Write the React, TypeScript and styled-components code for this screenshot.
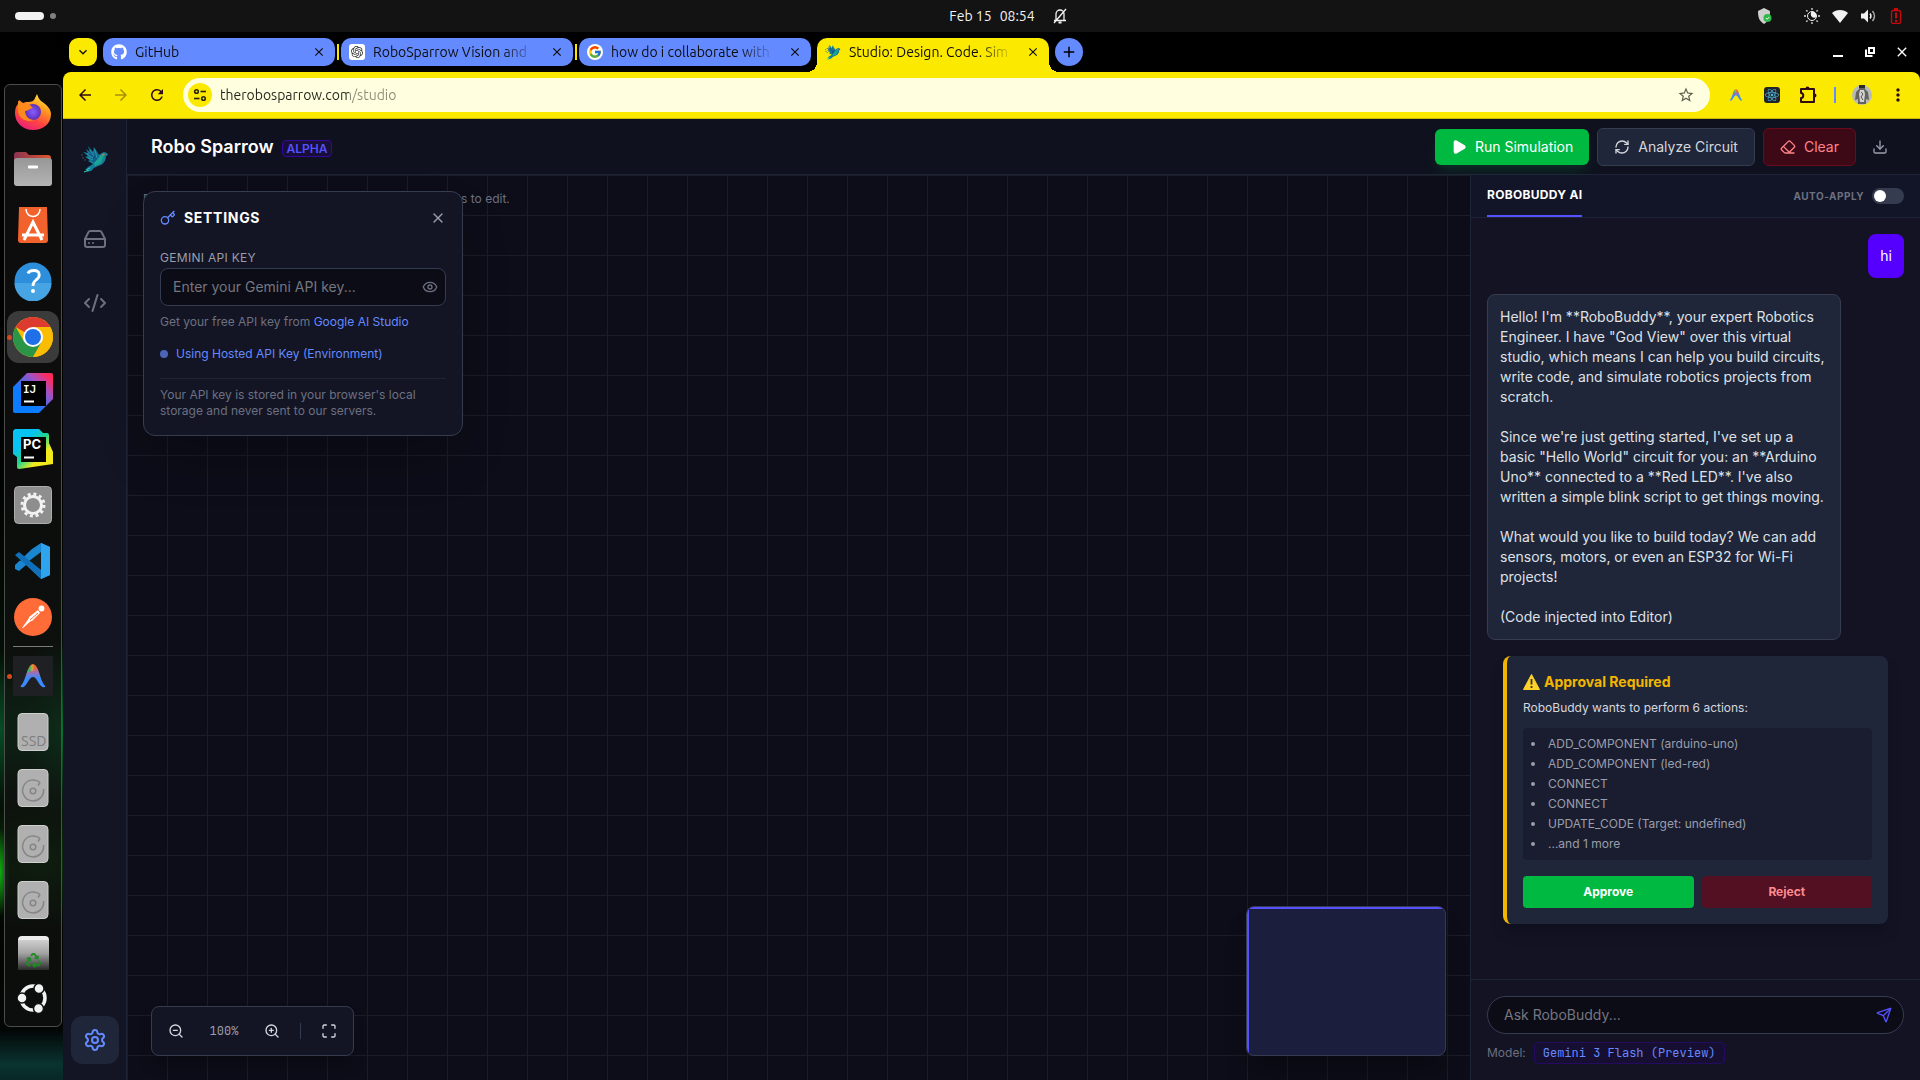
import React, { useState } from 'react';
import styled, { createGlobalStyle, css } from 'styled-components';
import {
  CodeXml, Download, Eraser, Eye, HardDrive, Key, Maximize, Play, RefreshCw, Send, Settings, X, ZoomIn, ZoomOut,
} from 'lucide-react';
import { FaGithub, FaReact, FaRecycle } from 'react-icons/fa';
import { FcGoogle } from 'react-icons/fc';
import { SiOpenai } from 'react-icons/si';
import { MdArrowBack, MdArrowForward, MdClose, MdExpandMore, MdMoreVert, MdRefresh, MdStarBorder, MdAdd } from 'react-icons/md';

const c = {
  yellow: '#fbe900',
  tab: '#648aff',
  rail: '#131525',
  header: '#0f111f',
  canvas: '#0c0d18',
  line: '#1e2437',
  edge: '#363c50',
  raised: '#20263a',
  muted: '#6c7080',
  soft: '#9a9dab',
  text: '#d5d7de',
  blue: '#648aff',
  indigo: '#5650ff',
  green: '#00b940',
};
const ui = `Inter, "Liberation Sans", sans-serif`;
const shell = `Ubuntu, "Open Sans", "Noto Sans", sans-serif`;
const mono = `"JetBrains Mono", "DejaVu Sans Mono", "Liberation Mono", monospace`;

const GlobalStyle = createGlobalStyle`
  *, *::before, *::after { box-sizing: border-box; }
  body { margin: 0; background: #000; font-family: ${ui}; }
  button, input { font: inherit; color: inherit; }
  button { border: 0; padding: 0; background: none; cursor: pointer; }
  h1, h2, h3, p, ul { margin: 0; padding: 0; }
  svg { display: block; flex: none; }
`;

/* ---------- desktop shell ---------- */
const Desktop = styled.div`
  height: 100vh;
  display: flex;
  flex-direction: column;
  overflow: hidden;
  background:
    radial-gradient(ellipse 10px 44px at 0 872px, #0fae10 0%, transparent 100%),
    radial-gradient(ellipse 60px 90px at 63px 730px, #08702f 0%, transparent 100%),
    radial-gradient(ellipse 40px 80px at 0 730px, #064d24 0%, transparent 100%),
    radial-gradient(ellipse 80px 70px at 40px 860px, #0b3d0c 0%, transparent 100%),
    linear-gradient(#000 0, #020303 500px, #041006 680px, #020602 960px, #020706 1030px, #0a3330 1064px, #072825 100%);
`;
const TopBar = styled.header`
  flex: none;
  height: 32px;
  display: grid;
  grid-template-columns: 1fr auto 1fr;
  align-items: center;
  background: #131313;
  color: #f2f2f2;
  font: 14px/20px ${shell};
`;
const Workspaces = styled.div`
  display: flex;
  align-items: center;
  gap: 6px;
  padding-left: 15px;
`;
const Pill = styled.i`
  width: 29px;
  height: 8px;
  border-radius: 4px;
  background: #f2f2f2;
`;
const Dot = styled.i`
  width: 6px;
  height: 6px;
  border-radius: 50%;
  background: #808080;
`;
const Clock = styled.div`
  display: flex;
  align-items: center;
  gap: 8px;
  padding-left: 96px;
  svg { margin-left: 10px; }
`;
const Tray = styled.div`
  display: flex;
  align-items: center;
  justify-content: flex-end;
  gap: 12px;
  padding-right: 16px;
`;
const TrayGap = styled.i`
  width: 8px;
`;
const Main = styled.div`
  flex: 1;
  min-height: 0;
  display: flex;
`;
const DockArea = styled.aside`
  flex: none;
  width: 63px;
  padding: 52px 1px 0 4px;
`;
const Dock = styled.nav`
  height: calc(100vh - 137px);
  max-height: 943px;
  display: flex;
  flex-direction: column;
  align-items: center;
  gap: 4px;
  padding: 2px 0 0;
  border: 1px solid #4b4d4b;
  border-radius: 6px;
  background: rgba(16, 18, 17, 0.72);
  overflow: hidden;
`;
const DockItem = styled.button<{ $active?: boolean; $running?: boolean; $cut?: boolean }>`
  position: relative;
  flex: none;
  width: 52px;
  height: 52px;
  display: grid;
  place-items: center;
  border-radius: 12px;
  background: ${(p) => (p.$active ? '#3b3b3b' : 'transparent')};
  ${(p) => p.$cut && css`
    height: 41px;
    margin-bottom: -3px;
    align-items: start;
    padding-top: 6px;
    overflow: hidden;
  `}
  ${(p) => p.$running && css`
    &::before {
      content: '';
      position: absolute;
      left: 0;
      top: 24px;
      width: 5px;
      height: 5px;
      border-radius: 50%;
      background: #d9481c;
    }
  `}
`;
const DockRule = styled.hr`
  flex: none;
  width: 40px;
  height: 1px;
  margin: -1px 0 -1px;
  border: 0;
  background: #7a7d7a;
`;

/* ---------- browser ---------- */
const Browser = styled.div`
  flex: 1;
  min-width: 0;
  display: flex;
  flex-direction: column;
`;
const TabStrip = styled.div`
  flex: none;
  height: 40px;
  display: flex;
  padding: 6px 6px 0;
  background: #000;
`;
const TabMenu = styled.button`
  width: 28px;
  height: 28px;
  margin-right: 6px;
  display: grid;
  place-items: center;
  border-radius: 9px;
  background: ${c.yellow};
  color: #111;
`;
const Tab = styled.div<{ $active?: boolean }>`
  position: relative;
  flex: 0 1 232px;
  min-width: 0;
  height: 28px;
  display: flex;
  align-items: center;
  gap: 8px;
  padding: 0 8px;
  border-radius: 10px;
  background: ${c.tab};
  color: #0d0d0d;
  font: 14px/20px ${shell};
  ${(p) => p.$active && css`
    height: 34px;
    padding-bottom: 6px;
    border-radius: 10px 10px 0 0;
    background: ${c.yellow};
    &::before, &::after {
      content: '';
      position: absolute;
      bottom: 0;
      width: 10px;
      height: 10px;
    }
    &::before {
      left: -10px;
      background: radial-gradient(circle at 0 0, transparent 10px, ${c.yellow} 10px);
    }
    &::after {
      right: -10px;
      background: radial-gradient(circle at 100% 0, transparent 10px, ${c.yellow} 10px);
    }
  `}
`;
const TabTitle = styled.span`
  flex: 1;
  min-width: 0;
  overflow: hidden;
  white-space: nowrap;
  mask-image: linear-gradient(90deg, #000 calc(100% - 40px), transparent calc(100% - 4px));
`;
const TabClose = styled.button`
  width: 16px;
  height: 16px;
  display: grid;
  place-items: center;
`;
const Favicon = styled.span<{ $bg?: string; $round?: boolean }>`
  flex: none;
  width: 16px;
  height: 16px;
  display: grid;
  place-items: center;
  border-radius: ${(p) => (p.$round ? '50%' : '3px')};
  background: ${(p) => p.$bg || 'none'};
  color: ${(p) => (p.$bg ? '#333' : '#fff')};
`;
const TabGap = styled.i<{ $hidden?: boolean }>`
  width: 2px;
  height: 16px;
  margin: 6px 2px 0;
  background: ${(p) => (p.$hidden ? 'transparent' : c.yellow)};
`;
const NewTab = styled.button`
  width: 28px;
  height: 28px;
  margin-left: 6px;
  display: grid;
  place-items: center;
  border-radius: 50%;
  background: ${c.tab};
  color: #000;
`;
const WindowControls = styled.div`
  display: flex;
  gap: 16px;
  margin: 0 4px 0 auto;
  color: #fff;
  button { width: 16px; height: 28px; display: grid; place-items: center; }
`;
const Toolbar = styled.div`
  flex: none;
  display: flex;
  align-items: center;
  padding: 6px 4px;
  border-bottom: 1px solid #c5b70c;
  border-radius: 8px 8px 0 0;
  background: ${c.yellow};
  color: #2d0c12;
`;
const ToolButton = styled.button<{ $dim?: boolean }>`
  width: 36px;
  height: 34px;
  display: grid;
  place-items: center;
  opacity: ${(p) => (p.$dim ? 0.4 : 1)};
`;
const Omnibox = styled.form`
  flex: 1;
  height: 34px;
  margin: 0 8px;
  display: flex;
  align-items: center;
  gap: 8px;
  padding: 0 15px 0 5px;
  border-radius: 17px;
  background: #ffffdf;
`;
const SiteInfo = styled.button`
  width: 24px;
  height: 24px;
  display: grid;
  place-items: center;
  border-radius: 50%;
  background: ${c.yellow};
`;
const Url = styled.input`
  flex: 1;
  min-width: 0;
  padding: 0;
  border: 0;
  outline: 0;
  font: 14px/20px ${shell};
  color: #24241c;
  background: linear-gradient(90deg, #24241c 129px, #8a8a78 129px);
  background-clip: text;
  -webkit-text-fill-color: transparent;
`;
const StarButton = styled.button`
  color: #5f5f52;
`;
const ToolRule = styled.i`
  width: 2px;
  height: 16px;
  margin: 0 8px;
  background: ${c.tab};
`;

/* ---------- studio ---------- */
const Studio = styled.div`
  flex: 1;
  min-height: 0;
  display: flex;
  color: ${c.text};
  font-size: 14px;
  line-height: 20px;
`;
const Rail = styled.nav`
  flex: none;
  width: 64px;
  display: flex;
  flex-direction: column;
  align-items: center;
  gap: 16px;
  padding: 16px 0;
  border-right: 1px solid ${c.line};
  background: ${c.rail};
`;
const Logo = styled.div`
  height: 48px;
  margin-bottom: 16px;
  display: grid;
  place-items: center;
`;
const RailButton = styled.button<{ $active?: boolean; $last?: boolean }>`
  width: 48px;
  height: 48px;
  display: grid;
  place-items: center;
  border-radius: 12px;
  color: ${(p) => (p.$active ? c.blue : c.muted)};
  background: ${(p) => (p.$active ? c.raised : 'transparent')};
  margin-top: ${(p) => (p.$last ? 'auto' : '0')};
`;
const Work = styled.div`
  flex: 1;
  min-width: 0;
  display: flex;
  flex-direction: column;
`;
const Header = styled.header`
  flex: none;
  height: 56px;
  display: flex;
  align-items: center;
  gap: 8px;
  padding: 0 24px;
  border-bottom: 1px solid ${c.line};
  background: ${c.header};
`;
const Brand = styled.h1`
  font-size: 18px;
  line-height: 28px;
  font-weight: 600;
  color: #fff;
`;
const Badge = styled.span`
  margin: 3px auto 0 0;
  padding: 0 4px;
  border: 1px solid #36079f;
  border-radius: 4px;
  background: #170f38;
  color: ${c.indigo};
  font-size: 12px;
  line-height: 15px;
  font-weight: 600;
`;
const Action = styled.button<{ $tone: 'run' | 'plain' | 'danger' }>`
  display: flex;
  align-items: center;
  gap: 8px;
  padding: 8px 16px;
  border-radius: 6px;
  ${(p) => p.$tone === 'run' && css`
    background: ${c.green};
    color: #fff;
    box-shadow: 0 10px 15px -3px rgba(0, 130, 60, 0.2), 0 4px 6px -4px rgba(0, 130, 60, 0.2);
  `}
  ${(p) => p.$tone === 'plain' && css`
    border: 1px solid ${c.edge};
    background: ${c.raised};
    color: ${c.text};
  `}
  ${(p) => p.$tone === 'danger' && css`
    border: 1px solid #6a0a1c;
    background: #3d0917;
    color: #ff8488;
  `}
`;
const IconButton = styled.button<{ $color?: string }>`
  padding: 8px;
  color: ${(p) => p.$color || c.soft};
`;
const Body = styled.div`
  flex: 1;
  min-height: 0;
  display: flex;
`;
const Canvas = styled.main`
  position: relative;
  flex: 1;
  min-width: 0;
  background-color: ${c.canvas};
  background-image:
    linear-gradient(90deg, #1a1c26 1px, transparent 1px),
    linear-gradient(#1a1c26 1px, transparent 1px);
  background-size: 40px 40px;
`;
const Hint = styled.p`
  position: absolute;
  left: 16px;
  top: 16px;
  font-size: 12px;
  line-height: 16px;
  color: ${c.muted};
`;
const Panel = styled.section`
  position: absolute;
  left: 16px;
  top: 16px;
  width: 320px;
  padding: 16px;
  border: 1px solid ${c.edge};
  border-radius: 12px;
  background: ${c.rail};
  box-shadow: 0 25px 50px -12px rgba(0, 0, 0, 0.3);
  font-size: 12px;
  line-height: 16px;
  color: ${c.muted};
`;
const PanelHead = styled.div`
  display: flex;
  align-items: center;
  gap: 8px;
  margin-bottom: 20px;
  color: ${c.blue};
  h2 {
    flex: 1;
    font-size: 14px;
    line-height: 20px;
    font-weight: 700;
    letter-spacing: 0.05em;
    color: #fff;
  }
  button { color: ${c.soft}; }
`;
const FieldLabel = styled.label`
  display: block;
  padding: 2px 0;
  letter-spacing: 0.025em;
  color: ${c.soft};
`;
const KeyField = styled.div`
  display: flex;
  align-items: center;
  margin-bottom: 8px;
  border: 1px solid ${c.edge};
  border-radius: 8px;
  background: #0b0c15;
  color: ${c.muted};
`;
const TextInput = styled.input`
  flex: 1;
  min-width: 0;
  padding: 8px 12px;
  border: 0;
  outline: 0;
  background: none;
  font-size: 14px;
  line-height: 20px;
  color: ${c.text};
  &::placeholder { color: #757681; opacity: 1; }
`;
const Reveal = styled.button`
  padding: 0 7px;
`;
const Link = styled.a`
  color: ${c.blue};
  text-decoration: none;
`;
const Status = styled.p`
  display: flex;
  align-items: center;
  gap: 8px;
  margin: 16px 0;
  color: ${c.blue};
  &::before {
    content: '';
    width: 8px;
    height: 8px;
    border-radius: 50%;
    background: #4a64b8;
  }
`;
const Note = styled.p`
  padding-top: 8px;
  border-top: 1px solid ${c.line};
`;
const ZoomBar = styled.div`
  position: absolute;
  left: 24px;
  bottom: 24px;
  display: flex;
  align-items: center;
  gap: 8px;
  padding: 8px;
  border: 1px solid ${c.edge};
  border-radius: 8px;
  background: ${c.rail};
  box-shadow: 0 10px 15px -3px rgba(0, 0, 0, 0.3);
`;
const ZoomValue = styled.output`
  width: 48px;
  text-align: center;
  font: 12px/16px ${mono};
  color: ${c.soft};
`;
const ZoomRule = styled.i`
  width: 1px;
  height: 16px;
  margin: 0 4px;
  background: ${c.edge};
`;
const MiniMap = styled.div`
  position: absolute;
  right: 24px;
  bottom: 24px;
  width: 200px;
  height: 150px;
  overflow: hidden;
  border: 1px solid ${c.edge};
  border-radius: 8px;
  background: #1c1e3e;
  box-shadow: 0 20px 25px -5px rgba(0, 0, 0, 0.3);
  &::before {
    content: '';
    display: block;
    height: 100%;
    border: solid ${c.indigo};
    border-width: 2px 0 0 2px;
  }
`;

/* ---------- assistant ---------- */
const Chat = styled.aside`
  flex: none;
  width: 450px;
  display: flex;
  flex-direction: column;
  border-left: 1px solid ${c.line};
  background: #131324;
`;
const ChatHead = styled.div`
  flex: none;
  display: flex;
  align-items: center;
  justify-content: space-between;
  padding: 0 16px;
  border-bottom: 1px solid ${c.line};
  background: #121527;
`;
const ChatTab = styled.button`
  padding: 12px 0;
  border-bottom: 2px solid ${c.indigo};
  font-size: 12px;
  line-height: 16px;
  font-weight: 700;
  letter-spacing: 0.025em;
  color: #fff;
`;
const Switch = styled.label`
  display: flex;
  align-items: center;
  gap: 8px;
  font-size: 10px;
  line-height: 16px;
  font-weight: 700;
  letter-spacing: 0.05em;
  color: ${c.muted};
  input {
    appearance: none;
    width: 32px;
    height: 16px;
    margin: 0;
    padding: 2px;
    border-radius: 8px;
    background: ${c.edge};
  }
  input::before {
    content: '';
    display: block;
    width: 12px;
    height: 12px;
    border-radius: 50%;
    background: #fff;
  }
  input:checked { background: ${c.indigo}; }
  input:checked::before { margin-left: auto; }
`;
const Messages = styled.div`
  flex: 1;
  min-height: 0;
  overflow: auto;
  display: flex;
  flex-direction: column;
  gap: 16px;
  padding: 16px;
`;
const Bubble = styled.div<{ $mine?: boolean }>`
  max-width: 85%;
  padding: 12px;
  border-radius: 8px;
  white-space: pre-wrap;
  align-self: ${(p) => (p.$mine ? 'flex-end' : 'flex-start')};
  background: ${(p) => (p.$mine ? '#5500ff' : c.raised)};
  border: ${(p) => (p.$mine ? '0' : `1px solid ${c.edge}`)};
  color: ${(p) => (p.$mine ? '#fff' : '#dfe1e6')};
`;
const Approval = styled.section`
  margin: 0 16px;
  padding: 16px;
  border-left: 4px solid #f3b600;
  border-radius: 8px;
  background: ${c.raised};
  box-shadow: 0 10px 15px -3px rgba(0, 0, 0, 0.25);
  font-size: 12px;
  line-height: 16px;
  h3 {
    display: flex;
    align-items: center;
    gap: 4px;
    margin-bottom: 8px;
    font-size: 14px;
    line-height: 20px;
    font-weight: 700;
    color: #f3b600;
  }
`;
const ActionList = styled.ul`
  display: flex;
  flex-direction: column;
  gap: 4px;
  margin: 12px 0 16px;
  padding: 8px;
  border-radius: 4px;
  background: #191d2f;
  color: ${c.soft};
  list-style: disc inside;
`;
const Choices = styled.div`
  display: grid;
  grid-template-columns: 1fr 1fr;
  gap: 8px;
`;
const Choice = styled.button<{ $reject?: boolean }>`
  padding: 8px;
  border-radius: 4px;
  font-weight: 700;
  background: ${(p) => (p.$reject ? '#521022' : c.green)};
  color: ${(p) => (p.$reject ? '#ff8a8e' : '#fff')};
`;
const Composer = styled.div`
  flex: none;
  display: flex;
  flex-direction: column;
  gap: 8px;
  padding: 16px;
  border-top: 1px solid ${c.line};
`;
const AskForm = styled.form`
  display: flex;
  align-items: center;
  border: 1px solid ${c.edge};
  border-radius: 19px;
  background: #0b0c15;
  color: ${c.indigo};
  input { padding: 8px 16px; }
  button { padding: 0 11px; }
`;
const ModelRow = styled.div`
  display: flex;
  align-items: center;
  gap: 8px;
  font-size: 12px;
  line-height: 16px;
  color: ${c.muted};
`;
const ModelName = styled.button`
  padding: 2px 8px;
  border: 1px solid #250b60;
  border-radius: 4px;
  background: #170f32;
  font: 12px/16px ${mono};
  color: ${c.blue};
`;

/* ---------- drawings ---------- */
const Bird = ({ size }: { size: number }) => (
  <svg width={size} height={size} viewBox="0 0 28 28">
    <path d="M7 1l5 6 1-5 5 8 3-2 2-1 3 1 1 2-2 1c0 5-3 9-8 10l-4 2-3 3-5 1 3-3-4 1 3-3 5-3-5-3 2-1-5-3 3-1-5-4 5 1-2-4 4 3z" fill="#147e96" />
    <path d="M8 3l5 7 1-6 4 9-4 5-6-4 3-1-6-4 4 0z" fill="#125b8a" />
    <path d="M9 5l4 6M14 5l2 8M6 9l6 4M7 13l5 2" stroke="#2fa9b4" strokeWidth="0.800" />
    <path d="M13 18l8-9 2 1-3 8-6 3z" fill="#1ca596" />
    <path d="M5 25l4-2M3 27l5-2" stroke="#2ad0c0" />
    <path d="M0 10h2M1 13h2M3 15h2" stroke="#35505f" />
    <circle cx="22.500" cy="9.500" r="1.100" fill="#f06a24" />
  </svg>
);
const BellOff = () => (
  <svg width="14" height="16" viewBox="0 0 14 16" fill="none" stroke="#f2f2f2" strokeWidth="1.300">
    <path d="M3 12V6a4 4 0 0 1 8 0v6M1 12.500h12M1 15L13 1" />
    <path d="M5.500 14.500h3" strokeWidth="2" />
  </svg>
);
const Shield = () => (
  <svg width="15" height="16" viewBox="0 0 15 16">
    <path d="M7 0l6 3c0 6-1 10-6 13C2 13 1 9 1 3z" fill="#cfcfcf" />
    <circle cx="10.500" cy="10" r="4" fill="#2eb84a" />
    <path d="M8.800 10l1.300 1.300 2.200-2.300" stroke="#fff" fill="none" />
  </svg>
);
const NightLight = () => (
  <svg width="16" height="16" viewBox="0 0 16 16">
    <path d="M8 0v2M8 14v2M0 8h2M14 8h2M2.300 2.300l1.200 1.200M12.500 12.500l1.200 1.200M2.300 13.700l1.200-1.200M12.500 3.500l1.200-1.200" stroke="#ddd" strokeWidth="1.300" />
    <circle cx="8" cy="8" r="4.500" fill="none" stroke="#f2f2f2" />
    <path d="M7.500 3.600a4.500 4.500 0 0 1 4.900 5.400c-1.500 1.200-3.400 1-4.400 0-1.500-1.400-1.600-3.600-.5-5.400z" fill="#f2f2f2" />
  </svg>
);
const Wifi = () => (
  <svg width="16" height="14" viewBox="0 0 16 14"><path d="M0 4C4 0 12 0 16 4L8 14z" fill="#f2f2f2" /></svg>
);
const Volume = () => (
  <svg width="16" height="16" viewBox="0 0 16 16" fill="none" stroke="#f2f2f2">
    <path d="M1 5.500h3l4-4v13l-4-4H1z" fill="#f2f2f2" stroke="none" />
    <path d="M10 5.500q2 2.500 0 5" strokeWidth="1.400" />
    <path d="M12.500 3q4 5 0 10" stroke="#aaa" strokeWidth="1.400" />
  </svg>
);
const Battery = () => (
  <svg width="16" height="16" viewBox="0 0 16 16" fill="none" stroke="#c9080c">
    <rect x="3.500" y="2.500" width="9" height="13" rx="1.500" strokeWidth="1.300" />
    <path d="M6 1h4M8 4.500v6M8 12v2" strokeWidth="2" />
  </svg>
);
const Tune = () => (
  <svg width="14" height="14" viewBox="0 0 14 14" fill="none" stroke="#2a2410" strokeWidth="1.600">
    <circle cx="3.500" cy="3.500" r="1.800" /><path d="M7.500 3.500H13" />
    <circle cx="10.500" cy="10.500" r="1.800" /><path d="M1 10.500h5.500" />
  </svg>
);
const Puzzle = () => (
  <svg width="18" height="18" viewBox="0 0 18 18" fill="none" stroke="#2d0c12" strokeWidth="2" strokeLinejoin="round">
    <path d="M2 3h13v13H2v-4c3 0 3-5 0-5z" />
    <path d="M6.500 2.500a2 2 0 0 1 4 0zM15.500 7.500a2 2 0 0 1 0 4z" fill="#2d0c12" stroke="none" />
  </svg>
);
const Restore = () => (
  <svg width="16" height="16" viewBox="0 0 16 16" fill="none" stroke="#fff" strokeWidth="2">
    <path d="M7 4h5v5H7z" /><path d="M4 5.500V12h6.500" />
  </svg>
);
const Arc = ({ size }: { size: number }) => (
  <svg width={size} height={size} viewBox="0 0 40 40">
    <defs>
      <linearGradient id="arcBase" x1="0" x2="0" y1="0" y2="1">
        <stop offset="0.100" stopColor="#f0642c" /><stop offset="0.350" stopColor="#a06fb0" /><stop offset="0.600" stopColor="#3b8bff" />
      </linearGradient>
      <linearGradient id="arcSide" x1="0" x2="1" y1="0" y2="0">
        <stop offset="0.250" stopColor="#2fbb6a" /><stop offset="0.500" stopColor="#f5b02e" stopOpacity="0.700" /><stop offset="0.650" stopColor="#f0503c" stopOpacity="0" />
      </linearGradient>
    </defs>
    <path d="M6 31c6-3 7-24 14-24s8 21 14 24c-1 2-3 2-5 0-4-4-5-10-9-10s-5 6-9 10c-2 2-4 2-5 0z" fill="url(#arcBase)" />
    <path d="M13 18c2-6 4-11 7-11s5 4 7 11c-3-5-11-5-14 0z" fill="url(#arcSide)" />
  </svg>
);
const Avatar = () => (
  <svg width="20" height="20" viewBox="0 0 20 20">
    <circle cx="10" cy="10" r="10" fill="#b9bbb8" />
    <path d="M7 0h6v4l3 3 1 8-3-1v5H6v-5l-3 1L4 7l3-3z" fill="#63635f" />
    <path d="M7 0h6v3H7z" fill="#2b2b2a" />
    <path d="M8 5h4l1 4-1 8H8L7 9z" fill="#d2d2ce" /><path d="M9 7l2 2-2 3 2 3" stroke="#555" fill="none" />
  </svg>
);
const Warning = () => (
  <svg width="17" height="16" viewBox="0 0 17 16">
    <path d="M8.500.500L16.500 15.500H.500z" fill="#fdd22a" stroke="#fdd22a" strokeLinejoin="round" />
    <path d="M8.500 5v5.500M8.500 12v2" stroke="#3a3222" strokeWidth="1.800" />
  </svg>
);

const Firefox = () => (
  <svg width="40" height="40" viewBox="0 0 40 40">
    <defs>
      <linearGradient id="ffBody" x1="0.800" y1="0" x2="0.300" y2="1">
        <stop offset="0" stopColor="#fff24a" /><stop offset="0.350" stopColor="#ff9a1f" /><stop offset="0.700" stopColor="#ff4444" /><stop offset="1" stopColor="#e8207a" />
      </linearGradient>
      <radialGradient id="ffCore"><stop offset="0" stopColor="#8a5cff" /><stop offset="1" stopColor="#5c2fb8" /></radialGradient>
    </defs>
    <path d="M2 20c0-4 1-7 3-9l1-4 4 3 3-1c3 0 6 0 8-2l3-6c1 3 2 5 4 7 6 4 10 8 10 13C38 31 30 37 20 37S2 30 2 20z" fill="url(#ffBody)" />
    <circle cx="20" cy="19" r="8" fill="url(#ffCore)" />
    <path d="M5 8l6 3 6 1 3 3c-3 0-4 3-8 3 0 5 4 9 9 9-8 3-14-1-16-8z" fill="#ff8a1c" />
  </svg>
);
const Files = () => (
  <svg width="40" height="40" viewBox="0 0 40 40">
    <defs>
      <linearGradient id="folder" x1="0" x2="1"><stop offset="0" stopColor="#8a3350" /><stop offset="1" stopColor="#e0562c" /></linearGradient>
      <linearGradient id="drawer" x1="0" x2="0" y1="0" y2="1"><stop offset="0" stopColor="#979797" /><stop offset="1" stopColor="#b4b4b4" /></linearGradient>
    </defs>
    <path d="M1 6a3 3 0 0 1 3-3h9l3 3h19a3 3 0 0 1 3 3v8H1z" fill="url(#folder)" />
    <rect x="1" y="9" width="38" height="28" rx="3" fill="url(#drawer)" />
    <rect x="15" y="16.500" width="10" height="3" rx="1" fill="#fff" />
  </svg>
);
const Store = () => (
  <svg width="40" height="40" viewBox="0 0 40 40" fill="none" stroke="#fff">
    <path d="M6 2h28l1 33a3 3 0 0 1-3 3H8a3 3 0 0 1-3-3z" fill="#f2622c" stroke="none" />
    <path d="M13 4c0 10 14 10 14 0" strokeWidth="1.500" />
    <path d="M11 35l9-18 9 18M9 30h22" strokeWidth="3" />
  </svg>
);
const Help = () => (
  <svg width="40" height="40" viewBox="0 0 40 40">
    <circle cx="20" cy="20" r="18.500" fill="#2d8fdb" />
    <path d="M1.500 22a18.500 18.500 0 0 0 37 0z" fill="#46a4e4" />
    <path d="M15 12.500q1-3 6-3c6 0 7 6 2 9.500-2 1.500-3 3-3 6" fill="none" stroke="#fff" strokeWidth="2.800" />
    <circle cx="20" cy="30" r="2" fill="#fff" />
  </svg>
);
const Chrome = () => (
  <svg width="40" height="40" viewBox="0 0 40 40">
    <circle cx="20" cy="20" r="20" fill="#fbbc04" />
    <path d="M20 20L2.700 10A20 20 0 0 1 37.300 10H20z" fill="#dd3b30" />
    <path d="M2.700 10A20 20 0 0 0 20 40l8.700-15L20 20 11.300 25z" fill="#2a9447" />
    <path d="M20 40l8.700-15a10 10 0 0 0-2-15h10.600A20 20 0 0 1 20 40z" fill="#fbbc04" />
    <circle cx="20" cy="20" r="10" fill="#fff" /><circle cx="20" cy="20" r="8" fill="#1f6fe8" />
  </svg>
);
const Jet = ({ label, kind }: { label: string; kind: 'ij' | 'pc' }) => (
  <svg width="40" height="40" viewBox="0 0 40 40">
    <defs>
      <linearGradient id="ij" x1="0" y1="1" x2="1" y2="0"><stop offset="0.350" stopColor="#0a7cff" /><stop offset="0.700" stopColor="#a84fc0" /><stop offset="0.900" stopColor="#ff2a5e" /></linearGradient>
      <linearGradient id="pc" x1="0" y1="0" x2="1" y2="1"><stop offset="0.300" stopColor="#07c3f2" /><stop offset="0.500" stopColor="#21d789" /><stop offset="0.700" stopColor="#f2ea1c" /></linearGradient>
    </defs>
    {kind === 'ij'
      ? <path d="M14 0h24a2 2 0 0 1 2 2v24L26 40H2a2 2 0 0 1-2-2V14z" fill="url(#ij)" />
      : <path d="M2 0h24l4 4h4a2 2 0 0 1 2 2v8l4 9v12L6 40a2 2 0 0 1-2-2V28l-4-3V2z" fill="url(#pc)" />}
    <rect x="8" y="8" width="25" height="25" fill="#000" />
    <text x="10" y="20" fill="#fff" fontFamily={kind === 'ij' ? mono : ui} fontWeight="700" fontSize={kind === 'ij' ? 11 : 13}>{label}</text>
    <path d="M11 28.500h10" stroke="#fff" strokeWidth="2" />
  </svg>
);
const Gear = () => (
  <svg width="40" height="40" viewBox="0 0 40 40" fill="none">
    <rect x="1.500" y="1.500" width="37" height="37" rx="4" fill="#8e8e8e" stroke="#aeaeae" />
    <circle cx="20" cy="20" r="11" stroke="#f2f2f2" strokeWidth="3" strokeDasharray="3 2.760" />
    <circle cx="20" cy="20" r="8.500" stroke="#f2f2f2" strokeWidth="3" />
  </svg>
);
const Code = () => (
  <svg width="40" height="40" viewBox="0 0 40 40">
    <path d="M28 2l9 4v28l-9 4L13 24l-7 6-4-2V24l17-16z" fill="#1a86d0" />
    <path d="M28 2l9 4v28l-9 4z" fill="#2fa4ee" />
    <path d="M28 11v18L16 20zM2 15l4-3 5 5-4 3zM2 25l5-5" fill="#111a18" />
    <path d="M2 14l4-3 22 18v8z" fill="#0f6fb8" />
  </svg>
);
const Postman = () => (
  <svg width="40" height="40" viewBox="0 0 40 40">
    <circle cx="20" cy="20" r="19" fill="#ff6c37" />
    <circle cx="28.500" cy="11.500" r="2.900" fill="#fff" />
    <path d="M16 20l9-7 2 3-8 8-4 1zM9 31l7-10 3 2-9 8z" fill="#fff" />
    <path d="M17 23l8-7" stroke="#ff6c37" />
  </svg>
);
const Disk = ({ ssd }: { ssd?: boolean }) => (
  <svg width="40" height="40" viewBox="0 0 40 40" fill="none" stroke="#858585">
    <rect x="5" y="1.500" width="30" height="37" rx="4" fill="#b0b0b0" stroke="#cfcfcf" />
    {ssd
      ? <text x="8" y="34" fill="#7e7e7e" stroke="none" fontFamily="Open Sans, sans-serif" fontSize="14">SSD</text>
      : <><path d="M27 14.500A10.500 10.500 0 1 0 30.500 21" strokeWidth="1.500" /><path d="M27 14.500l-2 3" strokeWidth="1.500" /><circle cx="20" cy="23" r="2.800" strokeWidth="1.500" /></>}
  </svg>
);
const TrashArt = styled.span`
  width: 31px;
  height: 34px;
  display: grid;
  place-items: end center;
  padding-bottom: 2px;
  border-top: 4px solid #ececec;
  border-radius: 4px 4px 0 0;
  background: linear-gradient(#cfcfcf, #a2a2a2 45%, #2a2a2a);
  color: #1d8a22;
`;
const UbuntuLogo = () => (
  <svg width="32" height="32" viewBox="0 0 32 32" fill="none">
    <circle cx="16" cy="16" r="12" stroke="#f2f2f2" strokeWidth="3.500" />
    <g fill="#f2f2f2" stroke="#101211" strokeWidth="1.500">
      <circle cx="5" cy="16" r="5" /><circle cx="22" cy="6.500" r="5" /><circle cx="21.500" cy="26.500" r="5" />
    </g>
  </svg>
);

const ArcTile = styled.span`
  width: 40px;
  height: 40px;
  display: grid;
  place-items: center;
  background: #1f2024;
`;

const message = `Hello! I'm **RoboBuddy**, your expert Robotics Engineer. I have "God View" over this virtual studio, which means I can help you build circuits, write code, and simulate robotics projects from scratch.

Since we're just getting started, I've set up a basic "Hello World" circuit for you: an **Arduino Uno** connected to a **Red LED**. I've also written a simple blink script to get things moving.

What would you like to build today? We can add sensors, motors, or even an ESP32 for Wi-Fi projects!

(Code injected into Editor)`;

const actions = ['ADD_COMPONENT (arduino-uno)', 'ADD_COMPONENT (led-red)', 'CONNECT', 'CONNECT', 'UPDATE_CODE (Target: undefined)', '...and 1 more'];

function SystemDock() {
  return (
    <DockArea>
      <Dock>
        <DockItem><Firefox /></DockItem>
        <DockItem><Files /></DockItem>
        <DockItem><Store /></DockItem>
        <DockItem><Help /></DockItem>
        <DockItem $active $running><Chrome /></DockItem>
        <DockItem><Jet label="IJ" kind="ij" /></DockItem>
        <DockItem><Jet label="PC" kind="pc" /></DockItem>
        <DockItem><Gear /></DockItem>
        <DockItem><Code /></DockItem>
        <DockItem><Postman /></DockItem>
        <DockRule />
        <DockItem $running><ArcTile><Arc size={36} /></ArcTile></DockItem>
        <DockItem><Disk ssd /></DockItem>
        <DockItem><Disk /></DockItem>
        <DockItem><Disk /></DockItem>
        <DockItem><Disk /></DockItem>
        <DockItem $cut><TrashArt><FaRecycle size={15} /></TrashArt></DockItem>
        <DockItem><UbuntuLogo /></DockItem>
      </Dock>
    </DockArea>
  );
}

function BrowserChrome() {
  return (
    <>
      <TabStrip>
        <TabMenu><MdExpandMore size={16} /></TabMenu>
        <Tab>
          <Favicon><FaGithub size={16} /></Favicon>
          <TabTitle>GitHub</TabTitle>
          <TabClose><MdClose size={14} /></TabClose>
        </Tab>
        <TabGap />
        <Tab>
          <Favicon $bg="#fff"><SiOpenai size={12} /></Favicon>
          <TabTitle>RoboSparrow Vision and</TabTitle>
          <TabClose><MdClose size={14} /></TabClose>
        </Tab>
        <TabGap />
        <Tab>
          <Favicon $bg="#fff" $round><FcGoogle size={14} /></Favicon>
          <TabTitle>how do i collaborate with</TabTitle>
          <TabClose><MdClose size={14} /></TabClose>
        </Tab>
        <TabGap $hidden />
        <Tab $active>
          <Favicon><Bird size={16} /></Favicon>
          <TabTitle>Studio: Design. Code. Sim</TabTitle>
          <TabClose><MdClose size={14} /></TabClose>
        </Tab>
        <NewTab><MdAdd size={18} /></NewTab>
        <WindowControls>
          <button aria-label="Minimize"><svg width="16" height="16"><path d="M3 12h10" stroke="#fff" strokeWidth="2" /></svg></button>
          <button aria-label="Restore"><Restore /></button>
          <button aria-label="Close"><MdClose size={16} /></button>
        </WindowControls>
      </TabStrip>
      <Toolbar>
        <ToolButton><MdArrowBack size={18} /></ToolButton>
        <ToolButton $dim><MdArrowForward size={18} /></ToolButton>
        <ToolButton><MdRefresh size={18} /></ToolButton>
        <Omnibox onSubmit={(e) => e.preventDefault()}>
          <SiteInfo type="button"><Tune /></SiteInfo>
          <Url aria-label="Address" defaultValue="therobosparrow.com/studio" />
          <StarButton type="button"><MdStarBorder size={18} /></StarButton>
        </Omnibox>
        <ToolButton><Arc size={18} /></ToolButton>
        <ToolButton><Favicon $bg="#20232a"><FaReact size={14} color="#4fb8dc" /></Favicon></ToolButton>
        <ToolButton><Puzzle /></ToolButton>
        <ToolRule />
        <ToolButton><Avatar /></ToolButton>
        <ToolButton><MdMoreVert size={20} /></ToolButton>
      </Toolbar>
    </>
  );
}

function SettingsPanel() {
  return (
    <Panel>
      <PanelHead>
        <Key size={16} />
        <h2>SETTINGS</h2>
        <button aria-label="Close settings"><X size={16} /></button>
      </PanelHead>
      <FieldLabel htmlFor="gemini-key">GEMINI API KEY</FieldLabel>
      <KeyField>
        <TextInput id="gemini-key" placeholder="Enter your Gemini API key..." />
        <Reveal aria-label="Show key"><Eye size={16} /></Reveal>
      </KeyField>
      <p>Get your free API key from <Link href="#ai-studio">Google AI Studio</Link></p>
      <Status>Using Hosted API Key (Environment)</Status>
      <Note>Your API key is stored in your browser's local storage and never sent to our servers.</Note>
    </Panel>
  );
}

function Assistant() {
  const [auto, setAuto] = useState(false);
  return (
    <Chat>
      <ChatHead>
        <ChatTab>ROBOBUDDY AI</ChatTab>
        <Switch>
          AUTO-APPLY
          <input type="checkbox" checked={auto} onChange={(e) => setAuto(e.target.checked)} />
        </Switch>
      </ChatHead>
      <Messages>
        <Bubble $mine>hi</Bubble>
        <Bubble>{message}</Bubble>
        <Approval>
          <h3><Warning />Approval Required</h3>
          <p>RoboBuddy wants to perform 6 actions:</p>
          <ActionList>{actions.map((a, i) => <li key={i}>{a}</li>)}</ActionList>
          <Choices>
            <Choice>Approve</Choice>
            <Choice $reject>Reject</Choice>
          </Choices>
        </Approval>
      </Messages>
      <Composer>
        <AskForm onSubmit={(e) => e.preventDefault()}>
          <TextInput aria-label="Ask RoboBuddy" placeholder="Ask RoboBuddy..." />
          <button aria-label="Send"><Send size={16} /></button>
        </AskForm>
        <ModelRow>Model: <ModelName>Gemini 3 Flash (Preview)</ModelName></ModelRow>
      </Composer>
    </Chat>
  );
}

export default function App() {
  return (
    <Desktop>
      <GlobalStyle />
      <TopBar>
        <Workspaces><Pill /><Dot /></Workspaces>
        <Clock><span>Feb 15</span><span>08:54</span><BellOff /></Clock>
        <Tray><Shield /><TrayGap /><NightLight /><Wifi /><Volume /><Battery /></Tray>
      </TopBar>
      <Main>
        <SystemDock />
        <Browser>
          <BrowserChrome />
          <Studio>
            <Rail>
              <Logo><Bird size={28} /></Logo>
              <RailButton aria-label="Components"><HardDrive size={24} /></RailButton>
              <RailButton aria-label="Code"><CodeXml size={24} /></RailButton>
              <RailButton aria-label="Settings" $active $last><Settings size={24} /></RailButton>
            </Rail>
            <Work>
              <Header>
                <Brand>Robo Sparrow</Brand>
                <Badge>ALPHA</Badge>
                <Action $tone="run"><Play size={16} fill="currentColor" />Run Simulation</Action>
                <Action $tone="plain"><RefreshCw size={16} />Analyze Circuit</Action>
                <Action $tone="danger"><Eraser size={16} />Clear</Action>
                <IconButton aria-label="Download"><Download size={16} /></IconButton>
              </Header>
              <Body>
                <Canvas>
                  <Hint>Drag to move. Click pins to wire. Select your components to edit.</Hint>
                  <SettingsPanel />
                  <ZoomBar>
                    <IconButton aria-label="Zoom out" $color={c.text}><ZoomOut size={16} /></IconButton>
                    <ZoomValue>100%</ZoomValue>
                    <IconButton aria-label="Zoom in" $color={c.text}><ZoomIn size={16} /></IconButton>
                    <ZoomRule />
                    <IconButton aria-label="Fit view" $color={c.text}><Maximize size={16} /></IconButton>
                  </ZoomBar>
                  <MiniMap />
                </Canvas>
                <Assistant />
              </Body>
            </Work>
          </Studio>
        </Browser>
      </Main>
    </Desktop>
  );
}
